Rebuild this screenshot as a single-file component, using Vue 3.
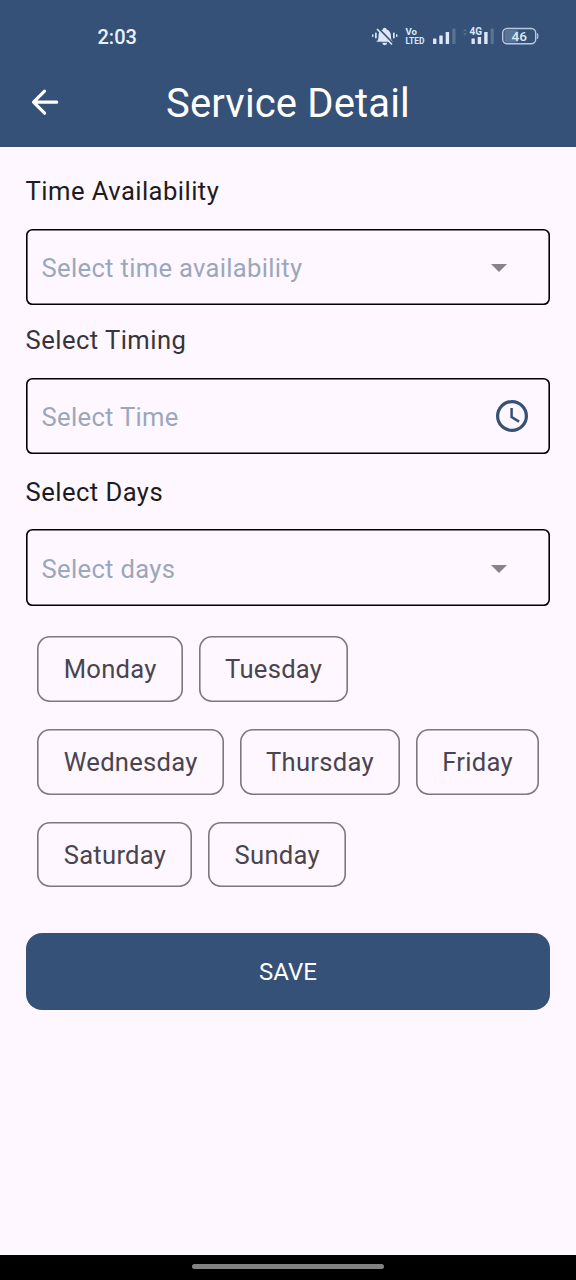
<script setup>
const dayRows = [
  ['Monday', 'Tuesday'],
  ['Wednesday', 'Thursday', 'Friday'],
  ['Saturday', 'Sunday'],
]
</script>

<template>
  <div class="screen">
    <header class="header">
      <div class="status">
        <span class="clock">2:03</span>
        <svg class="indicators" width="180" height="28" viewBox="368 22 180 28">
          <g fill="#dce8f8">
            <path d="M376 41.800c2-1 2.500-2.600 2.500-5.800 0-3.400 1.700-5.700 4.300-6.400a1.900 1.900 0 0 1 3.800 0c2.600.7 4.300 3 4.300 6.400 0 3.200.5 4.800 2.500 5.800zM382.300 42.800h4.800a2.400 2.400 0 0 1-4.800 0z" />
            <rect x="375" y="32.500" width="1.700" height="6" rx=".8" />
            <rect x="372" y="34.300" width="1.500" height="2.600" rx=".7" />
            <rect x="393" y="32.500" width="1.700" height="6" rx=".8" />
            <rect x="396" y="34.300" width="1.500" height="2.600" rx=".7" />
          </g>
          <path d="M378.500 28.300l15 15.500" stroke="#355177" stroke-width="1.800" />
          <path d="M377 29l15 15.500" stroke="#dce8f8" stroke-width="1.600" />
          <g class="net">
            <text x="405.500" y="35" textLength="11.500" lengthAdjust="spacingAndGlyphs">Vo</text>
            <text x="405.500" y="44" textLength="19" lengthAdjust="spacingAndGlyphs">LTED</text>
            <text class="gen" x="469.500" y="35.400" textLength="12.500" lengthAdjust="spacingAndGlyphs">4G</text>
          </g>
          <g fill="#dce8f8">
            <rect x="433" y="38.500" width="3.400" height="5.500" rx=".5" />
            <rect x="439.300" y="35.500" width="3.400" height="8.500" rx=".5" />
            <rect x="445.700" y="32" width="3.400" height="12" rx=".5" />
            <rect x="471.500" y="38.500" width="3.300" height="5.500" rx=".5" />
            <rect x="477.700" y="37" width="3.400" height="7" rx=".5" />
            <rect x="484.200" y="32" width="3.400" height="12" rx=".5" />
          </g>
          <g fill="#5b7394">
            <rect x="452.300" y="28.500" width="3.200" height="15.500" rx=".5" />
            <rect x="490.600" y="28.500" width="3.200" height="15.500" rx=".5" />
            <path d="M463 31.200l2-2.200 2 2.200zM463 33.300l2 2.200 2-2.200z" />
          </g>
          <rect x="504.500" y="30" width="14" height="12.500" rx="2" fill="#5b7598" />
          <rect x="502.700" y="28.500" width="33" height="15.300" rx="4.500" fill="none" stroke="#b9cae0" stroke-width="1.400" />
          <path d="M537.300 33.500q1.300 2.600 0 5.200" fill="none" stroke="#b9cae0" stroke-width="1.300" />
          <text class="battery" x="511.500" y="41" textLength="15.500" lengthAdjust="spacingAndGlyphs">46</text>
        </svg>
      </div>
      <div class="appbar">
        <svg class="back" width="38.400" height="38.400" viewBox="0 0 24 24">
          <path d="M19.200 12H5M11.600 5.100L4.700 12l6.900 6.900" fill="none" stroke="#fff" stroke-width="2" stroke-linecap="round" stroke-linejoin="round" />
        </svg>
        <h1 class="title">Service Detail</h1>
      </div>
    </header>

    <main class="form">
      <label class="label">Time Availability</label>
      <div class="field">
        <span>Select time availability</span>
        <svg class="caret" width="16" height="8" viewBox="0 0 16 8"><path d="M0 0h16l-8 8z" fill="#89828b" /></svg>
      </div>
      <label class="label timing">Select Timing</label>
      <div class="field">
        <span>Select Time</span>
        <svg class="watch" width="32" height="32" viewBox="0 0 32 32">
          <g fill="none" stroke="#355177">
            <circle cx="16" cy="16" r="14.400" stroke-width="3.200" />
            <path d="M15.600 8v9.100l7.500 4.500" stroke-width="2.500" />
          </g>
        </svg>
      </div>
      <label class="label days">Select Days</label>
      <div class="field">
        <span>Select days</span>
        <svg class="caret" width="16" height="8" viewBox="0 0 16 8"><path d="M0 0h16l-8 8z" fill="#89828b" /></svg>
      </div>

      <div class="chips">
        <div v-for="(row, i) in dayRows" :key="i" class="chip-row">
          <button v-for="day in row" :key="day" class="chip">{{ day }}</button>
        </div>
      </div>

      <button class="save">SAVE</button>
    </main>

    <footer class="navbar"><div class="handle"></div></footer>
  </div>
</template>

<style>
body {
  background: #fef7ff;
}
</style>

<style scoped>
.screen {
  width: 576px;
  height: 1280px;
  display: flex;
  flex-direction: column;
  overflow: hidden;
  background: #fef7ff;
  font-family: Roboto, "Liberation Sans", sans-serif;
}
.header {
  height: 147px;
  flex: none;
  background: #355177;
  color: #fff;
}
.status {
  height: 58px;
  display: flex;
  justify-content: space-between;
  padding: 0 28px 0 97.500px;
}
.clock {
  font-size: 20px;
  font-weight: 500;
  line-height: 28px;
  margin-top: 23px;
  color: #e8f2ff;
}
.indicators {
  margin-top: 22px;
}
.net text {
  font-size: 9.500px;
  font-weight: 700;
  fill: #dce8f8;
}
.net .gen {
  font-size: 11.500px;
}
.battery {
  font-size: 13px;
  font-weight: 500;
  fill: #dce8f8;
}
.appbar {
  height: 89px;
  display: grid;
  grid-template-columns: 90px 1fr 90px;
  align-items: center;
}
.back {
  margin-left: 26px;
}
.title {
  margin: 2px 0 0;
  font-size: 40px;
  font-weight: 400;
  line-height: 48px;
  letter-spacing: 0.150px;
  text-align: center;
  white-space: nowrap;
}
.form {
  flex: 1;
  display: flex;
  flex-direction: column;
  padding: 25px 25.600px 0;
}
.label {
  height: 38px;
  line-height: 38px;
  margin-bottom: 18.600px;
  font-size: 25.600px;
  letter-spacing: 0.450px;
  color: #1d1b20;
}
.timing {
  margin-top: 15.600px;
  color: #38343b;
}
.days {
  margin-top: 18.500px;
}
.field {
  box-sizing: border-box;
  height: 76.800px;
  display: flex;
  align-items: center;
  justify-content: space-between;
  padding: 1.600px 22px 0 16px;
  border-radius: 6.400px;
  box-shadow: inset 0 0 0 1.600px #000;
  font-size: 25.600px;
  letter-spacing: 0.310px;
  color: #9aa7bc;
}
.caret {
  margin-right: 21.500px;
}
.watch {
  margin-bottom: 2px;
}
.chips {
  display: flex;
  flex-direction: column;
  gap: 27.200px;
  margin: 30px 0 0 11.800px;
}
.chip-row {
  display: flex;
  gap: 16px;
}
.chip {
  height: 65.600px;
  padding: 0.800px 26px 0 26.300px;
  border: 0;
  border-radius: 12.800px;
  background: transparent;
  box-shadow: inset 0 0 0 1.600px #7d7780;
  font: 400 25.600px/64.800px Roboto, "Liberation Sans", sans-serif;
  letter-spacing: 0.280px;
  color: #49454f;
}
.save {
  height: 76.800px;
  margin-top: 45.400px;
  border: 0;
  border-radius: 16px;
  background: #355177;
  color: #fff;
  font: 400 24px/76.800px Roboto, "Liberation Sans", sans-serif;
}
.navbar {
  box-sizing: border-box;
  height: 25.500px;
  flex: none;
  display: flex;
  justify-content: center;
  align-items: flex-start;
  padding-top: 9.500px;
  background: #000;
}
.handle {
  width: 192px;
  height: 5px;
  border-radius: 3px;
  background: #828282;
}
</style>
